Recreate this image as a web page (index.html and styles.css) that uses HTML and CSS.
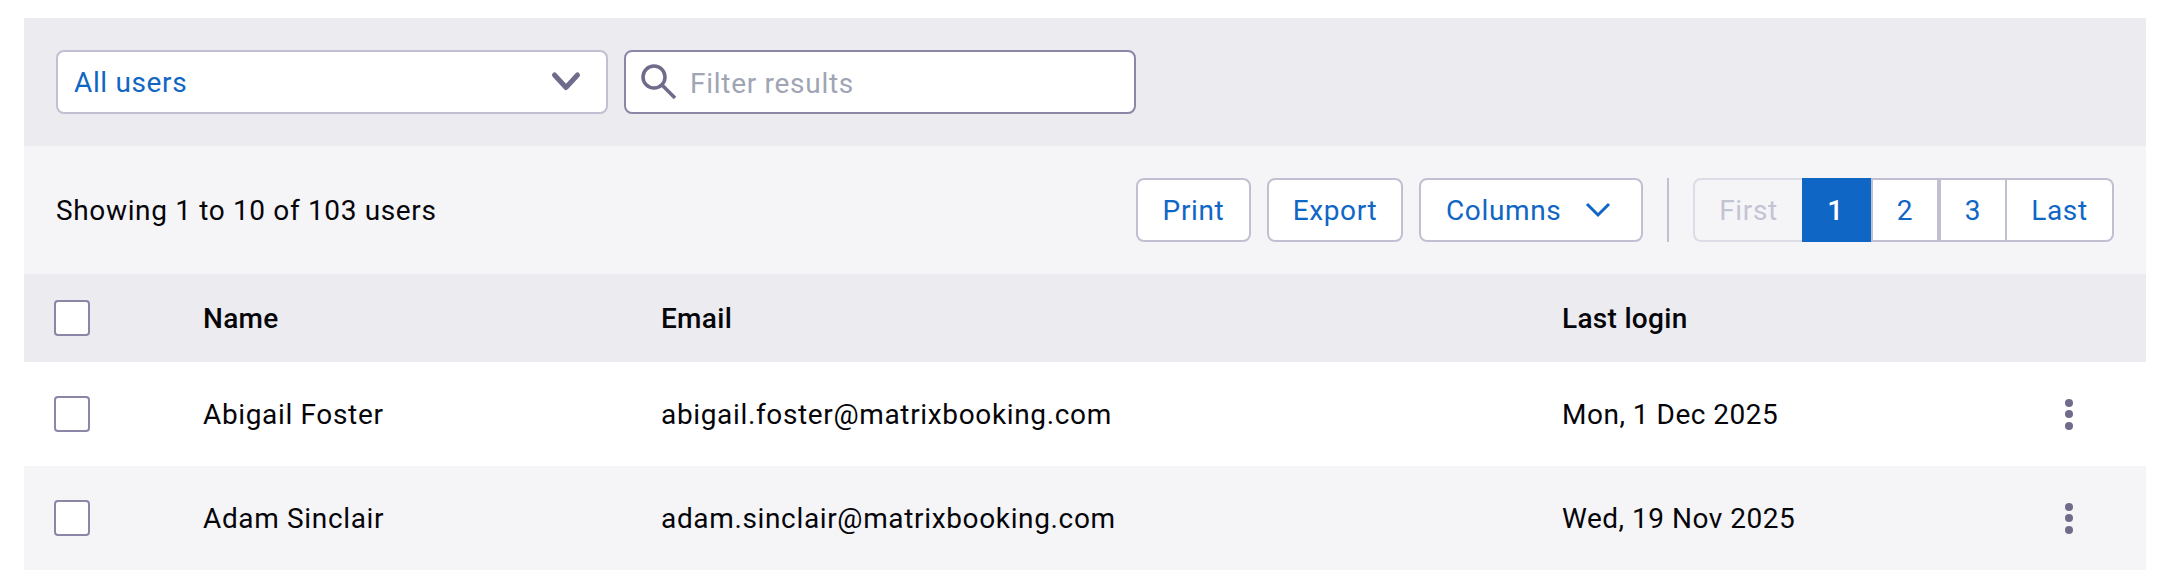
FILE: index.html
```html
<!DOCTYPE html>
<html lang="en">
<head>
<meta charset="utf-8">
<title>Users</title>
<link rel="stylesheet" href="styles.css">
</head>
<body>
<main class="page">
  <section class="filters">
    <div class="select">
      <span>All users</span>
      <svg class="select-chevron" width="32" height="24" viewBox="0 0 32 24"><path d="M4.500 5 16 17.500 27.500 5" fill="none" stroke="#6f6b8a" stroke-width="5" stroke-linecap="round" stroke-linejoin="round"/></svg>
    </div>
    <div class="search">
      <svg class="search-icon" width="38" height="38" viewBox="0 0 38 38"><circle cx="14" cy="14" r="11" fill="none" stroke="#6f6b8a" stroke-width="3.500"/><path d="M22 22 35 35" fill="none" stroke="#6f6b8a" stroke-width="3.500"/></svg>
      <span class="placeholder">Filter results</span>
    </div>
  </section>
  <section class="toolbar">
    <div class="count">Showing 1 to 10 of 103 users</div>
    <div class="actions">
      <button class="btn btn-print">Print</button>
      <button class="btn btn-export">Export</button>
      <button class="btn btn-columns">Columns
        <svg width="26" height="18" viewBox="0 0 26 18"><path d="M2 3 13 14 24 3" fill="none" stroke="#1066c4" stroke-width="3"/></svg>
      </button>
      <div class="divider"></div>
      <nav class="pager">
        <span class="page-item first">First</span>
        <span class="page-item current">1</span>
        <span class="page-item two">2</span>
        <span class="page-item three">3</span>
        <span class="page-item last">Last</span>
      </nav>
    </div>
  </section>
  <div class="row head">
    <span class="check"></span>
    <span>Name</span>
    <span>Email</span>
    <span>Last login</span>
    <span></span>
  </div>
  <div class="row">
    <span class="check"></span>
    <span>Abigail Foster</span>
    <span>abigail.foster@matrixbooking.com</span>
    <span class="date">Mon, 1 Dec 2025</span>
    <span class="kebab"><i></i><i></i><i></i></span>
  </div>
  <div class="row alt">
    <span class="check"></span>
    <span>Adam Sinclair</span>
    <span>adam.sinclair@matrixbooking.com</span>
    <span class="date">Wed, 19 Nov 2025</span>
    <span class="kebab"><i></i><i></i><i></i></span>
  </div>
</main>
</body>
</html>
```
FILE: styles.css
```css
* { box-sizing: border-box; }
html, body { margin: 0; background: #fff; }
body {
  font-family: Roboto, "Liberation Sans", sans-serif;
  font-size: 28px;
  letter-spacing: 0.65px;
  color: #05050a;
}
.page { padding: 18px 18px 14px 24px; }
.filters {
  display: flex;
  gap: 16px;
  height: 128px;
  padding: 32px;
  background: #ebebf0;
}
.select {
  width: 552px;
  height: 64px;
  display: flex;
  align-items: center;
  justify-content: space-between;
  padding: 0 24px 0 16px;
  background: #fff;
  border: 2px solid #c0c0d2;
  border-radius: 8px;
  color: #1066c4;
}
.search {
  width: 512px;
  height: 64px;
  display: flex;
  align-items: center;
  gap: 12px;
  padding: 2px 14px 0;
  background: #fff;
  border: 2px solid #8a86a6;
  border-radius: 8px;
}
.search-icon { flex: none; margin-top: -2px; }
.placeholder { color: #9fa5b4; letter-spacing: 0.72px; }
.toolbar {
  height: 128px;
  display: flex;
  align-items: center;
  justify-content: space-between;
  padding: 0 32px;
  background: #f5f5f8;
}
.actions { display: flex; align-items: center; }
.btn {
  height: 64px;
  padding: 0;
  font: inherit;
  letter-spacing: inherit;
  color: #1066c4;
  background: #fff;
  border: 2px solid #c0c0d2;
  border-radius: 8px;
  display: flex;
  align-items: center;
  justify-content: center;
}
.btn-print { width: 115px; margin-right: 16px; }
.btn-export { width: 136px; margin-right: 16px; }
.btn-columns {
  width: 224px;
  gap: 24px;
  margin-right: 24px;
  justify-content: flex-start;
  padding-left: 25px;
}
.divider { width: 2px; height: 64px; background: #c0c0d2; margin-right: 24px; }
.pager { display: flex; height: 64px; }
.page-item {
  display: flex;
  align-items: center;
  justify-content: center;
  height: 64px;
  color: #1066c4;
  background: #fff;
  border: 2px solid #c0c0d2;
  border-left: 0;
}
.first {
  width: 109px;
  color: #c3c4d3;
  background: #f5f5f8;
  border-color: #dcdce6;
  border-left: 2px solid #dcdce6;
  border-right: 0;
  border-radius: 8px 0 0 8px;
}
.current {
  width: 69px;
  color: #fff;
  background: #1066c4;
  border-color: #1066c4;
  font-weight: 500;
}
.two { width: 70px; border-left: 2px solid #c0c0d2; border-right-width: 4px; }
.three { width: 66px; }
.last { width: 107px; border-radius: 0 8px 8px 0; }
.row {
  display: grid;
  grid-template-columns: 179px 458px 901px 1fr auto;
  align-items: center;
  height: 104px;
  background: #fff;
}
.row.head { height: 88px; background: #ebebf0; font-weight: 500; letter-spacing: 0.3px; }
.row.alt { background: #f5f5f8; }
.date { letter-spacing: 0.5px; }
.check {
  width: 36px;
  height: 36px;
  margin-left: 30px;
  background: #fff;
  border: 2px solid #8a86a6;
  border-radius: 4px;
}
.kebab {
  margin-right: 73px;
  display: flex;
  flex-direction: column;
  gap: 3.500px;
}
.kebab i {
  display: block;
  width: 8px;
  height: 8px;
  border-radius: 50%;
  background: #6f6b8a;
}
```
